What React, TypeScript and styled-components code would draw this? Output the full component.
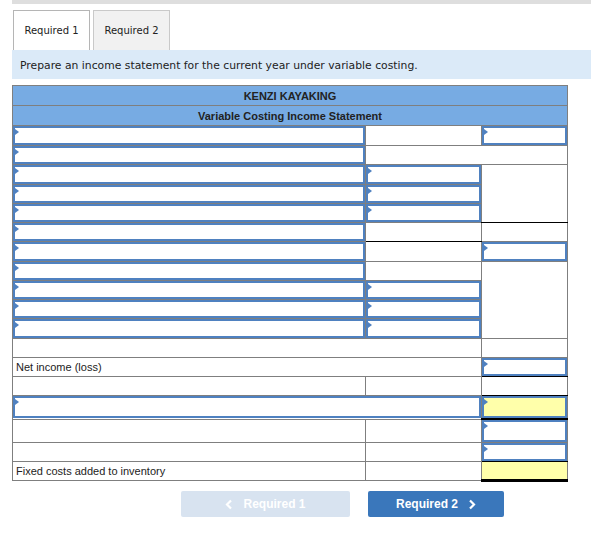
import React from "react";
import styled, { createGlobalStyle } from "styled-components";

const Global = createGlobalStyle`
  html, body { margin: 0; padding: 0; background: #fff; }
  body { font-family: "Liberation Sans", Arial, sans-serif; }
`;

const Page = styled.div`
  padding-left: 12px;
  width: 579px;
`;

const TopBar = styled.div`
  height: 4px;
  background: #dedede;
`;

const Tabs = styled.div`
  display: flex;
  gap: 3px;
  margin-top: 6px;
  padding-left: 1px;
`;

const Tab = styled.div<{ $active?: boolean }>`
  width: 77px;
  height: 40px;
  box-sizing: border-box;
  border: 1px solid ${(p) => (p.$active ? "#b5b5b5" : "#c9c9c9")};
  border-bottom: none;
  background: ${(p) => (p.$active ? "#fff" : "#f1f1f1")};
  display: flex;
  align-items: center;
  justify-content: center;
  font-family: "DejaVu Sans", Verdana, sans-serif;
  font-size: 10px;
  color: #222;
`;

const Info = styled.div`
  height: 29px;
  box-sizing: border-box;
  padding-top: 2px;
  background: #dbeaf8;
  display: flex;
  align-items: center;
  padding-left: 8px;
  font-family: "DejaVu Sans", Verdana, sans-serif;
  font-size: 10.8px;
  color: #222;
`;

const Table = styled.table`
  margin-top: 6px;
  width: 555px;
  border-collapse: collapse;
  table-layout: fixed;
  font-family: "Liberation Sans", Arial, sans-serif;
  font-size: 11px;
  color: #222;
`;

const HeadCell = styled.td`
  background: #77abe3;
  border: 1px solid #7f7f7f;
  height: 19px;
  padding: 0;
  text-align: center;
  font-weight: bold;
  font-size: 11px;
`;

const Cell = styled.td<{ $h: number; $bt?: string; $bb?: string; $yellow?: boolean }>`
  border: 1px solid #7f7f7f;
  ${(p) => (p.$bt ? `border-top: ${p.$bt};` : "")}
  ${(p) => (p.$bb ? `border-bottom: ${p.$bb};` : "")}
  height: ${(p) => p.$h}px;
  padding: 0;
  vertical-align: middle;
  background: ${(p) => (p.$yellow ? "#ffffaa" : "transparent")};
`;

const Label = styled.span`
  padding-left: 3px;
  font-size: 11px;
`;

const Input = styled.div<{ $h: number; $yellow?: boolean }>`
  position: relative;
  box-sizing: border-box;
  height: ${(p) => p.$h}px;
  border: 2px solid #4f81c0;
  background: ${(p) => (p.$yellow ? "#ffffaa" : "#fff")};
  &::before {
    content: "";
    position: absolute;
    left: 0;
    top: 1px;
    border-top: 3px solid transparent;
    border-bottom: 3px solid transparent;
    border-left: 4px solid #4f81c0;
  }
`;

const Nav = styled.div`
  display: flex;
  gap: 18px;
  margin-top: 9px;
  padding-left: 169px;
`;

const NavButton = styled.div<{ $disabled?: boolean; $w: number }>`
  width: ${(p) => p.$w}px;
  height: 26px;
  border-radius: 2px;
  background: ${(p) => (p.$disabled ? "#d8e3f0" : "#3a77bb")};
  color: #fff;
  display: flex;
  align-items: center;
  justify-content: center;
  gap: 10px;
  font-weight: bold;
  font-size: 12px;
  font-family: "Liberation Sans", Arial, sans-serif;
`;

const Chevron = ({ dir }: { dir: "l" | "r" }) => (
  <svg width="8" height="11" viewBox="0 0 8 11">
    <path
      d={dir === "l" ? "M6 1.5 L2 5.5 L6 9.5" : "M2 1.5 L6 5.5 L2 9.5"}
      fill="none"
      stroke="#fff"
      strokeWidth="2.2"
    />
  </svg>
);

type C =
  | { kind: "in"; span?: number; yellow?: boolean; bt?: string; bb?: string }
  | { kind: "plain"; span?: number; rows?: number; text?: string; yellow?: boolean; bt?: string; bb?: string };

const IN = (o: Partial<{ span: number; yellow: boolean; bt: string; bb: string }> = {}): C => ({ kind: "in", ...o });
const P = (o: Partial<{ span: number; rows: number; text: string; yellow: boolean; bt: string; bb: string }> = {}): C => ({ kind: "plain", ...o });

const BK = "1px solid #000";
const BK2 = "2px solid #000";
const BK3 = "3px solid #000";

const rows: { h: number; cells: C[] }[] = [
  { h: 19, cells: [IN(), P(), IN()] },
  { h: 18, cells: [IN(), P({ span: 2 })] },
  { h: 19, cells: [IN(), IN(), P({ rows: 3, bb: BK })] },
  { h: 18, cells: [IN(), IN()] },
  { h: 18, cells: [IN(), IN()] },
  { h: 18, cells: [IN(), P({ bb: BK }), P()] },
  { h: 19, cells: [IN(), P(), IN()] },
  { h: 18, cells: [IN(), P(), P({ rows: 4 })] },
  { h: 18, cells: [IN(), IN()] },
  { h: 18, cells: [IN(), IN()] },
  { h: 19, cells: [IN(), IN()] },
  { h: 18, cells: [P({ span: 2 }), P()] },
  { h: 18, cells: [P({ span: 2, text: "Net income (loss)" }), IN({ bt: BK, bb: BK })] },
  { h: 18, cells: [P(), P(), P({ bb: BK })] },
  { h: 22, cells: [IN({ span: 2 }), IN({ yellow: true, bb: BK2 })] },
  { h: 22, cells: [P(), P(), IN()] },
  { h: 18, cells: [P(), P(), IN({ bb: BK })] },
  { h: 17, cells: [P({ text: "Fixed costs added to inventory" }), P(), P({ yellow: true, bb: BK3 })] },
];

export default function App() {
  return (
    <>
      <Global />
      <Page>
        <TopBar />
        <Tabs>
          <Tab $active>Required 1</Tab>
          <Tab>Required 2</Tab>
        </Tabs>
        <Info>Prepare an income statement for the current year under variable costing.</Info>
        <Table>
          <colgroup>
            <col style={{ width: 353 }} />
            <col style={{ width: 116 }} />
            <col style={{ width: 86 }} />
          </colgroup>
          <tbody>
            <tr>
              <HeadCell colSpan={3}>KENZI KAYAKING</HeadCell>
            </tr>
            <tr>
              <HeadCell colSpan={3}>Variable Costing Income Statement</HeadCell>
            </tr>
            {rows.map((r, i) => (
              <tr key={i}>
                {r.cells.map((c, j) =>
                  c.kind === "in" ? (
                    <Cell key={j} $h={r.h} colSpan={c.span} $bt={c.bt} $bb={c.bb}>
                      <Input $h={r.h} $yellow={c.yellow} />
                    </Cell>
                  ) : (
                    <Cell
                      key={j}
                      $h={r.h}
                      colSpan={c.span}
                      rowSpan={c.rows}
                      $bt={c.bt}
                      $bb={c.bb}
                      $yellow={c.yellow}
                    >
                      {c.text ? <Label>{c.text}</Label> : null}
                    </Cell>
                  )
                )}
              </tr>
            ))}
          </tbody>
        </Table>
        <Nav>
          <NavButton $disabled $w={169}>
            <Chevron dir="l" />
            Required 1
          </NavButton>
          <NavButton $w={136}>
            Required 2
            <Chevron dir="r" />
          </NavButton>
        </Nav>
      </Page>
    </>
  );
}
